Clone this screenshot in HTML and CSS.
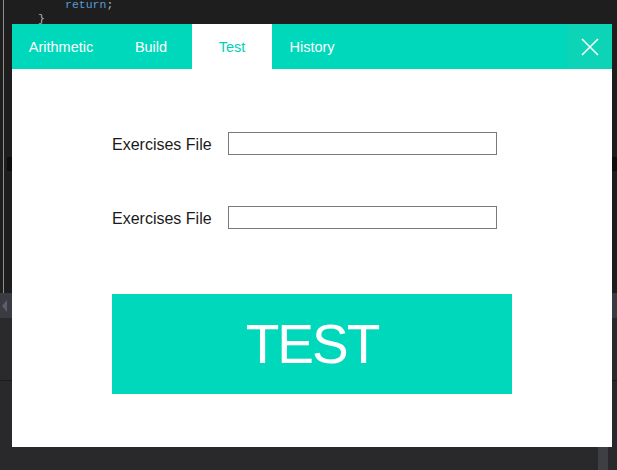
FILE: index.html
```html
<!DOCTYPE html>
<html>
<head>
<meta charset="utf-8">
<link rel="stylesheet" href="styles.css">
</head>
<body>
<div class="desktop">
  <div class="editor">
    <div class="gutter-line"></div>
    <div class="code">
      <div class="line l1"><span class="kw">return</span>;</div>
      <div class="line l2">}</div>
    </div>
    <div class="marker marker-left"></div>
    <div class="marker marker-right"></div>
  </div>
  <div class="hscroll">
    <span class="arrow"></span>
  </div>
  <div class="panel">
    <div class="panel-top"></div>
    <div class="panel-bottom">
      <span class="corner"></span>
    </div>
  </div>

  <div class="dialog">
    <div class="header">
      <div class="tab tab-first">Arithmetic</div>
      <div class="tab">Build</div>
      <div class="tab active">Test</div>
      <div class="tab">History</div>
      <div class="spacer"></div>
      <div class="close">
        <svg width="18" height="18" viewBox="0 0 18 18">
          <path d="M1 1 L17 17 M17 1 L1 17" stroke="#ffffff" stroke-width="1.6" fill="none"/>
        </svg>
      </div>
    </div>
    <div class="content">
      <div class="row">
        <label class="label">Exercises File</label>
        <input class="field" type="text">
      </div>
      <div class="row">
        <label class="label">Exercises File</label>
        <input class="field" type="text">
      </div>
      <div class="test-btn">TEST</div>
    </div>
  </div>
</div>
</body>
</html>
```

FILE: styles.css
```css
html, body {
  margin: 0;
  padding: 0;
}
body {
  background: #29292c;
  font-family: "Liberation Sans", Arial, sans-serif;
  width: 617px;
  height: 470px;
  overflow: hidden;
}
.desktop {
  position: relative;
  width: 617px;
  height: 470px;
  display: flex;
  flex-direction: column;
}
.editor {
  position: relative;
  height: 293px;
  background: #1e1e1e;
}
.gutter-line {
  position: absolute;
  left: 3px;
  top: 0;
  width: 1px;
  height: 293px;
  background: #8e8e8e;
}
.code {
  font-family: "Liberation Mono", monospace;
  font-size: 11.5px;
  color: #b4b4b4;
}
.line {
  height: 12px;
  line-height: 12px;
}
.l1 {
  margin-top: -1px;
  padding-left: 65px;
}
.l2 {
  padding-left: 38px;
  margin-top: 2px;
}
.kw {
  color: #569cd6;
}
.marker {
  position: absolute;
  top: 157px;
  height: 14px;
  background: #0e0e0e;
}
.marker-left {
  left: 7px;
  width: 6px;
}
.marker-right {
  left: 612px;
  width: 5px;
}
.hscroll {
  height: 25px;
  background: #3b3b43;
  position: relative;
}
.arrow {
  position: absolute;
  left: 2px;
  top: 7px;
  width: 0;
  height: 0;
  border-top: 6px solid transparent;
  border-bottom: 6px solid transparent;
  border-right: 5px solid #5e5e68;
}
.panel {
  flex: 1;
  display: flex;
  flex-direction: column;
}
.panel-top {
  height: 62px;
  background: #2a2a2d;
  border-bottom: 1px solid #1c1c1e;
}
.panel-bottom {
  flex: 1;
  background: #29292c;
  position: relative;
}
.corner {
  position: absolute;
  left: 598px;
  bottom: 0;
  width: 10px;
  height: 23px;
  background: #3e3e45;
}
.dialog {
  position: absolute;
  left: 12px;
  top: 24px;
  width: 600px;
  height: 423px;
  background: #ffffff;
  display: flex;
  flex-direction: column;
}
.header {
  height: 45px;
  background: #00d8bb;
  display: flex;
}
.tab {
  width: 80px;
  display: flex;
  align-items: center;
  justify-content: center;
  color: #ffffff;
  font-size: 14.5px;
}
.tab-first {
  width: 98px;
}
.tab.active {
  background: #ffffff;
  color: #00d1b6;
}
.tab-first + .tab {
  width: 82px;
}
.spacer {
  flex: 1;
}
.close {
  width: 45px;
  display: flex;
  align-items: center;
  justify-content: center;
  background: #0dd4b7;
}
.content {
  padding: 63px 0 0 100px;
  display: flex;
  flex-direction: column;
}
.row {
  display: flex;
  align-items: center;
  height: 23px;
  margin-bottom: 51px;
}
.label {
  width: 116px;
  font-size: 16px;
  color: #1a1a1a;
  padding-top: 2px;
}
.field {
  box-sizing: border-box;
  width: 269px;
  height: 23px;
  border: 1px solid #7a7a7a;
  margin: 0;
  padding: 0 4px;
  background: #ffffff;
  outline: none;
}
.test-btn {
  margin-top: 14px;
  width: 400px;
  height: 100px;
  background: #00d8bb;
  color: #ffffff;
  font-size: 55px;
  letter-spacing: -2px;
  display: flex;
  align-items: center;
  justify-content: center;
}
```
